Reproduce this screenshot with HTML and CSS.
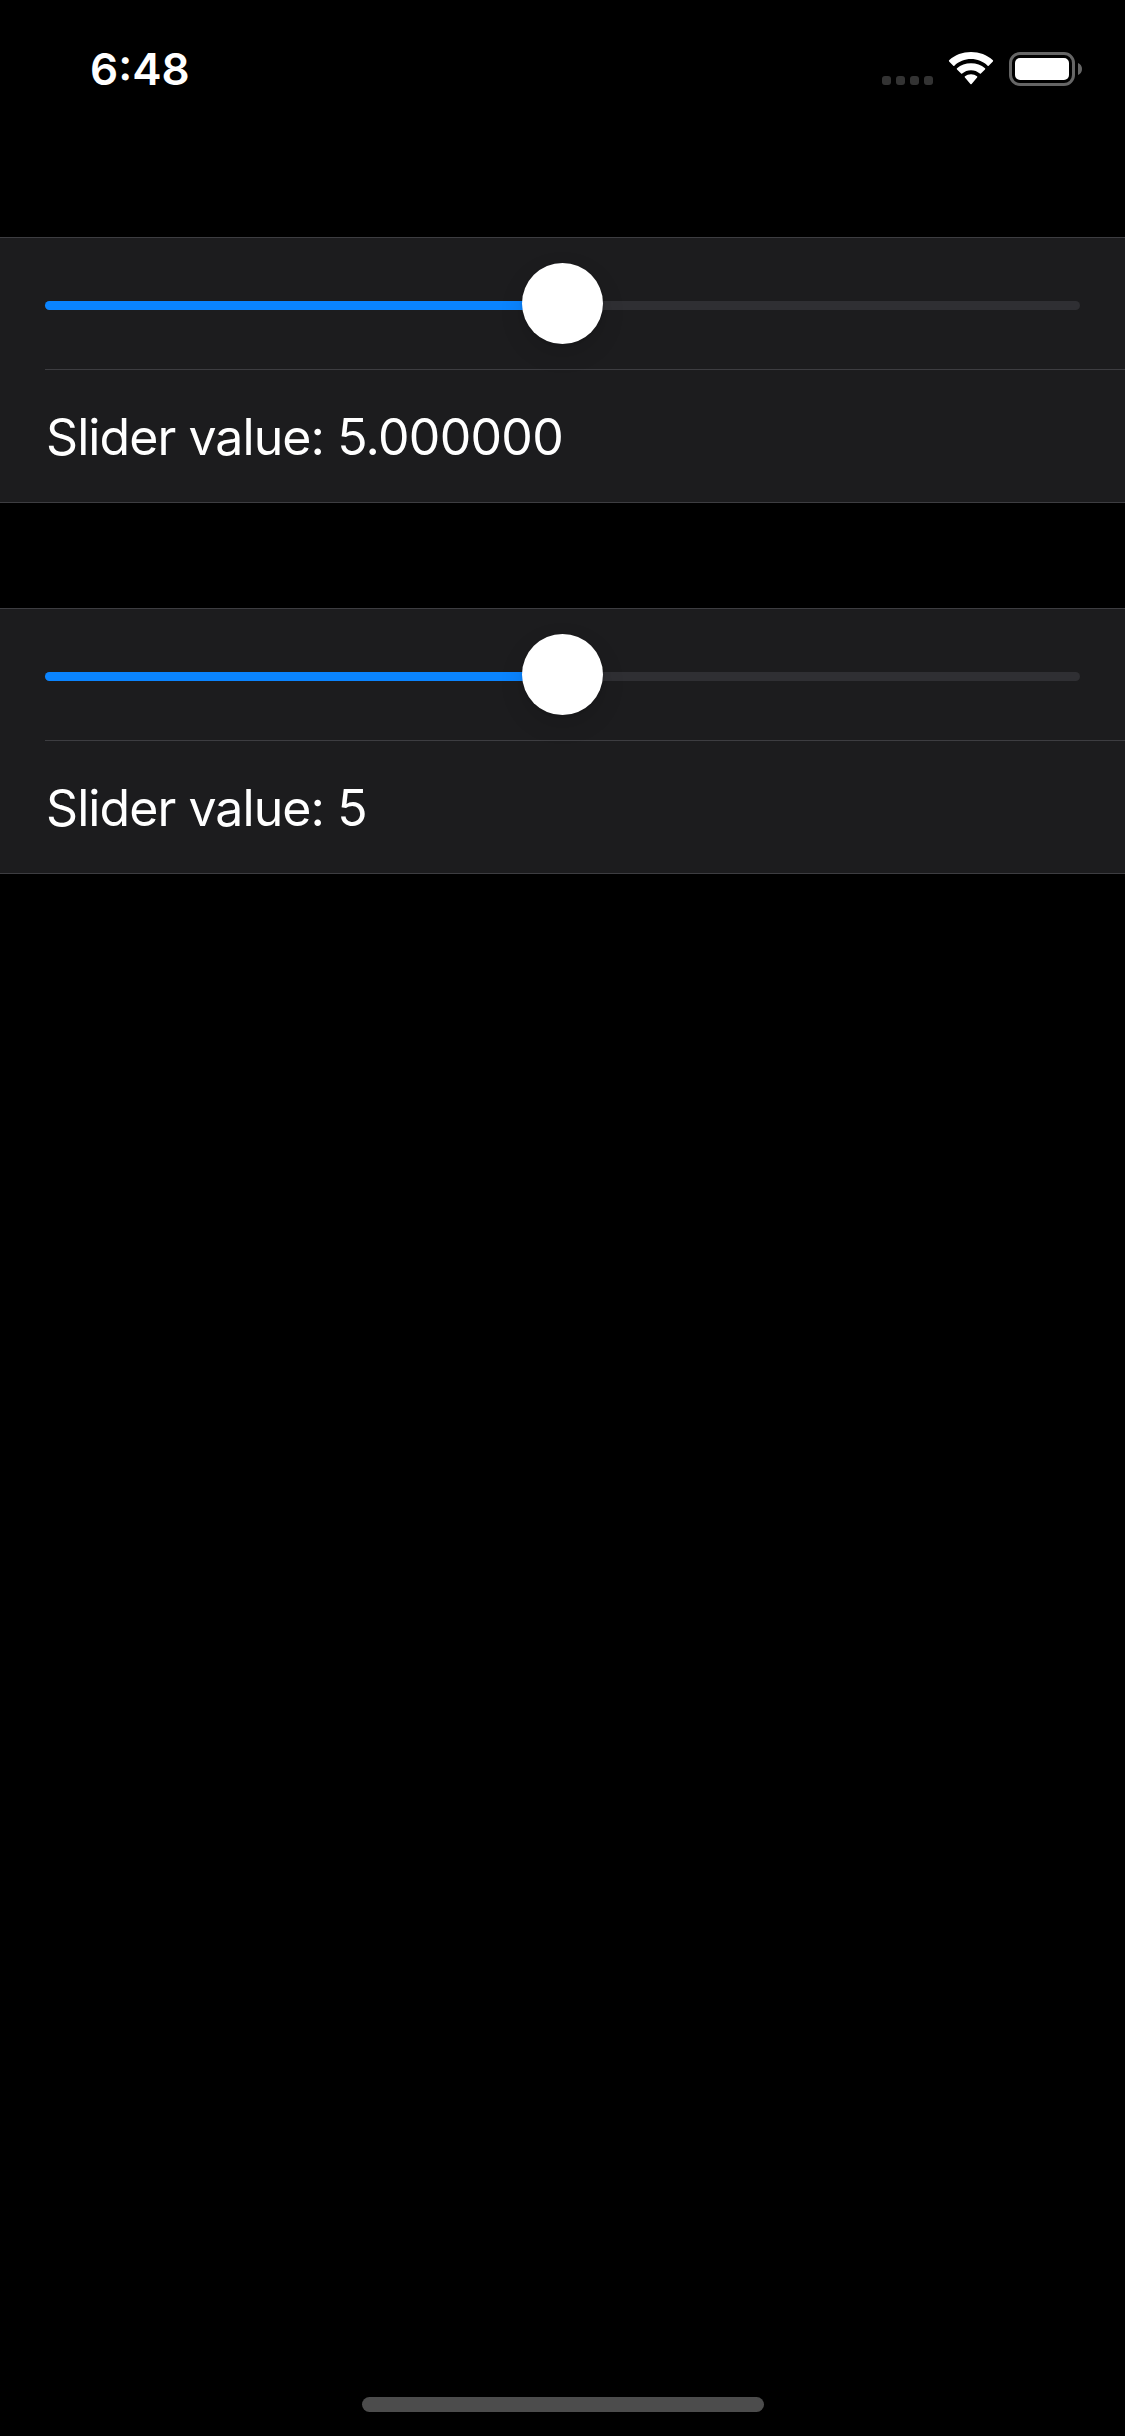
FILE: index.html
```html
<!DOCTYPE html>
<html lang="en">
<head>
<meta charset="utf-8">
<title>Slider</title>
<link rel="stylesheet" href="styles.css">
</head>
<body>
<header class="status">
  <div class="time">6:48</div>
  <div class="indicators">
    <div class="signal"><i></i><i></i><i></i><i></i></div>
    <svg class="wifi" width="48" height="34" viewBox="0 0 48 34" fill="#fff">
      <path d="M24 7.1C30.3 7.1 36.1 9.5 40.6 13.7Q41.2 14.2 41.7 13.7L45.9 9.5Q46.4 8.900 45.9 8.300C40 2.800 32.300 0 24 0S8 2.800 2.100 8.300Q1.600 8.900 2.100 9.500L6.300 13.700Q6.800 14.200 7.400 13.700C11.900 9.500 17.700 7.100 24 7.100Z"/>
      <path d="M24 18.300C27.300 18.300 30.400 19.500 32.800 21.600Q33.400 22.100 33.900 21.600L38 17.500Q38.600 16.900 38 16.300C34.200 12.900 29.400 11.300 24 11.300S13.800 12.900 10 16.300Q9.400 16.900 10 17.500L14.100 21.600Q14.600 22.100 15.200 21.600C17.600 19.500 20.700 18.300 24 18.300Z"/>
      <path d="M30.100 25.500Q30.700 24.900 30 24.300C28.400 23 26.300 22.300 24 22.300S19.600 23 18 24.300Q17.300 24.900 17.900 25.500L23.400 31.900Q24 32.500 24.600 31.900Z"/>
    </svg>
    <svg class="battery" width="74" height="34" viewBox="0 0 74 34">
      <rect x="1.500" y="1.500" width="63" height="31" rx="9.500" fill="none" stroke="#666" stroke-width="3"/>
      <rect x="6" y="6" width="54" height="22" rx="5" fill="#fff"/>
      <path d="M69 11C71.500 12 73 14.300 73 17S71.500 22 69 23Z" fill="#666"/>
    </svg>
  </div>
</header>
<main class="form">
  <section class="group">
    <div class="row slider"><div class="track"><div class="fill"></div><div class="thumb"></div></div></div>
    <div class="row label">Slider value: <span class="value">5.000000</span></div>
  </section>
  <section class="group">
    <div class="row slider"><div class="track"><div class="fill"></div><div class="thumb"></div></div></div>
    <div class="row label">Slider value: <span class="value">5</span></div>
  </section>
</main>
<footer class="home"><div class="bar"></div></footer>
</body>
</html>
```
FILE: styles.css
```css
* { box-sizing: border-box; }
body {
  margin: 0;
  height: 2436px;
  display: flex;
  flex-direction: column;
  background: #000;
  color: #fff;
  font-family: Inter, "Liberation Sans", sans-serif;
}
.status {
  height: 132px;
  padding: 0 42px 0 90px;
  display: flex;
  justify-content: space-between;
  align-items: flex-start;
}
.time {
  padding-top: 42px;
  font-size: 44px;
  line-height: 54px;
  font-weight: 600;
}
.indicators {
  padding-top: 52px;
  display: flex;
  align-items: flex-start;
}
.signal {
  display: flex;
  gap: 5px;
  padding-top: 24px;
  margin-right: 14px;
}
.signal i {
  width: 9px;
  height: 9px;
  border-radius: 3px;
  background: #333;
}
.wifi { margin-right: 14px; }
.form {
  flex: 1;
  padding-top: 105px;
  display: flex;
  flex-direction: column;
  gap: 105px;
}
.group {
  height: 266px;
  background: #1c1c1e;
  border-top: 1px solid #3d3d41;
  border-bottom: 1px solid #3d3d41;
}
.row { margin-left: 45px; }
.slider {
  height: 132px;
  padding: 63px 45px 0 0;
  border-bottom: 1px solid #3d3d41;
}
.track {
  position: relative;
  height: 9px;
  border-radius: 4.5px;
  background: #2f2f33;
}
.fill {
  width: 50%;
  height: 9px;
  border-radius: 4.5px;
  background: #0a84ff;
}
.thumb {
  position: absolute;
  left: 477px;
  top: -38px;
  width: 81px;
  height: 81px;
  border-radius: 50%;
  background: #fff;
  box-shadow: 0 1px 3px rgba(0, 0, 0, .12), 0 9px 24px rgba(0, 0, 0, .12);
}
.label {
  height: 132px;
  padding: 1px 0 0 1px;
  font-size: 50px;
  line-height: 132px;
  letter-spacing: -.93px;
  white-space: nowrap;
}
.value { letter-spacing: -.7px; }
.home {
  height: 39px;
  display: flex;
  justify-content: center;
}
.bar {
  width: 402px;
  height: 15px;
  margin-left: 1px;
  border-radius: 7.5px;
  background: #4c4c4c;
}
```
